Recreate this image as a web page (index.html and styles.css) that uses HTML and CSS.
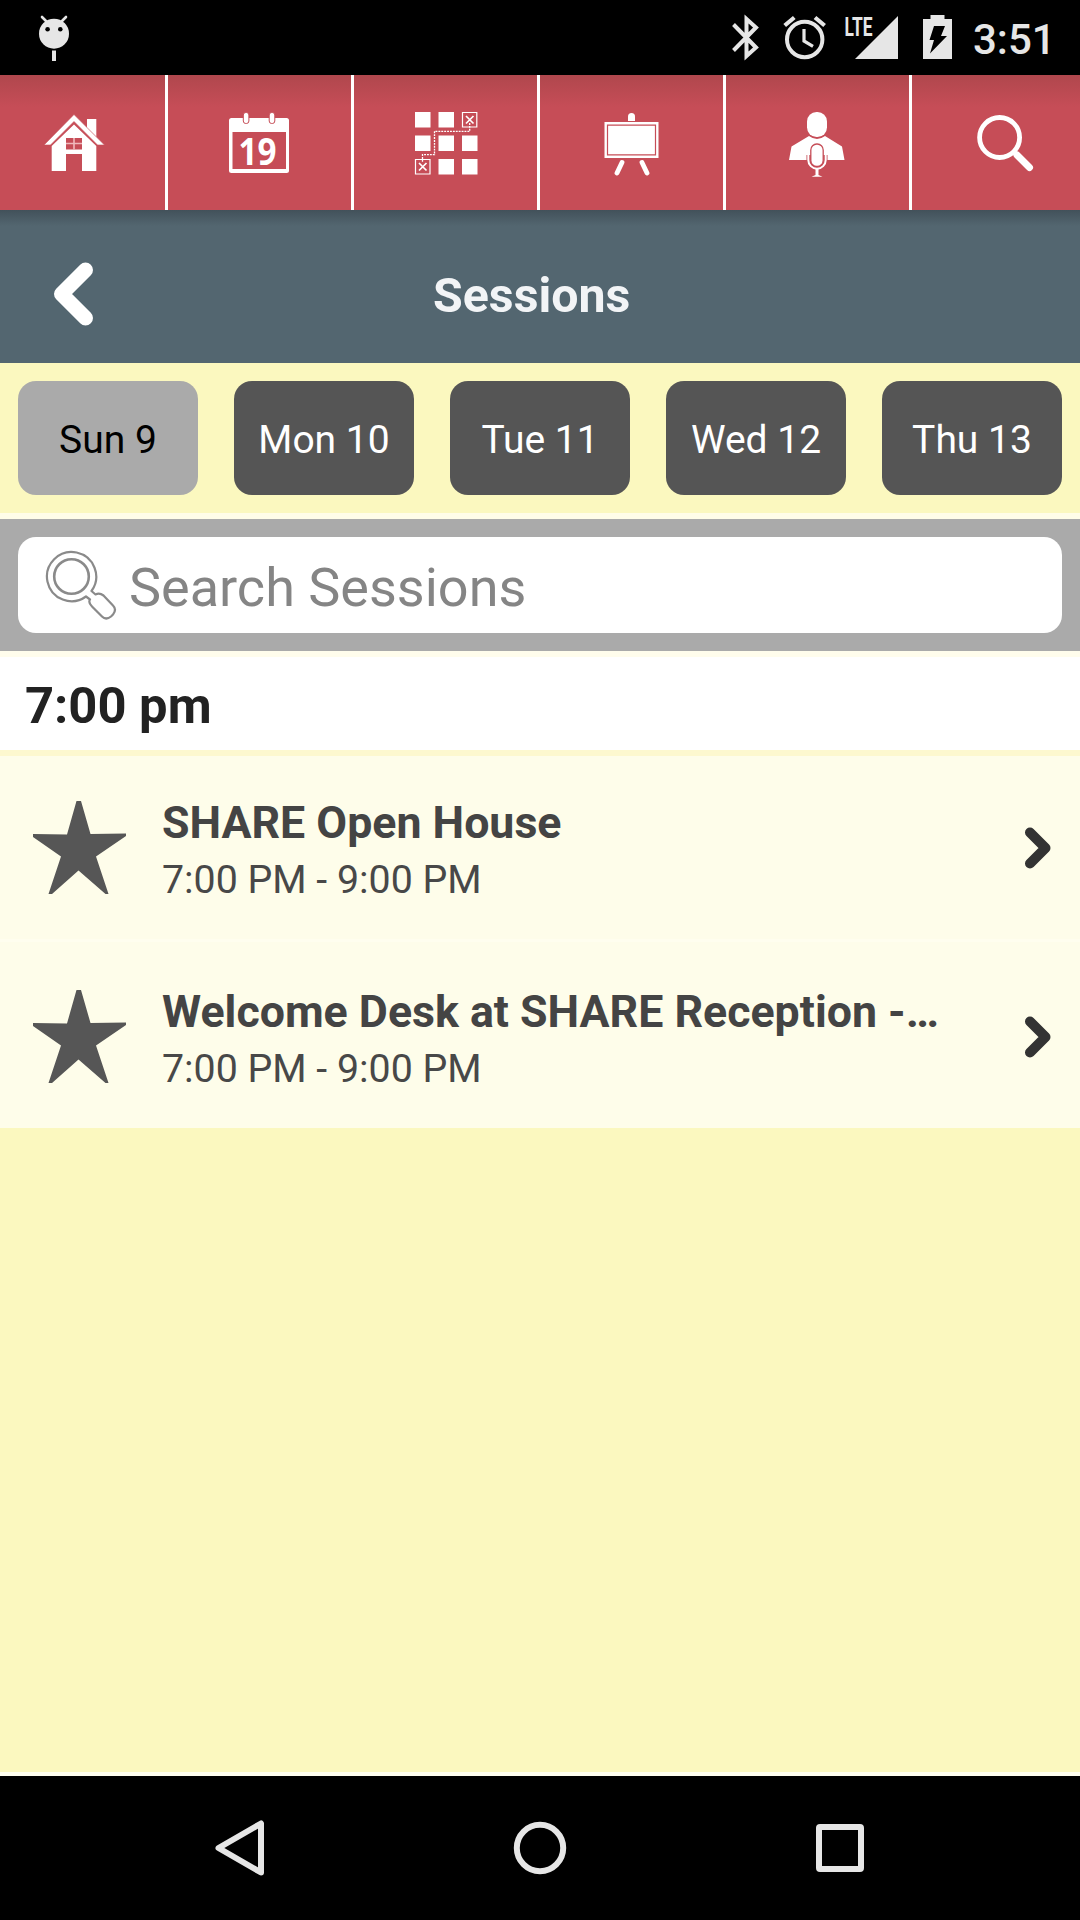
FILE: index.html
```html
<!DOCTYPE html>
<html lang="en">
<head>
  <meta charset="UTF-8" />
  <meta name="viewport" content="width=device-width, initial-scale=1.0"/>
  <title>Sessions</title>
  <link rel="stylesheet" href="styles.css">
</head>
<body>
  <!-- status bar -->
  <div class="status-bar">
    <svg class="debug-icon" width="34" height="48" viewBox="37 14 34 48">
      <path d="M42 17l5 5M66 17l-5 5" stroke="#e6e6e6" stroke-width="2.6" stroke-linecap="round"/>
      <circle cx="54" cy="33.7" r="15" fill="#e6e6e6"/>
      <circle cx="47.6" cy="29.3" r="2.3"/>
      <circle cx="60.3" cy="29.3" r="2.3"/>
      <path d="M52 50.5h4V61h-4z" fill="#e6e6e6"/>
    </svg>
    <svg class="status-icons" width="226" height="75" viewBox="728 0 226 75" fill="none" stroke="#e6e6e6">
      <path d="M733.5 24.5L756 47.5 746.5 56V19L756 27.5 733.5 50.5" stroke-width="4"/>
      <circle cx="804.7" cy="39.5" r="17.7" stroke-width="4"/>
      <path d="M804 29v12l9 5.3" stroke-width="3.2"/>
      <path d="M784.7 25.5l9.6-8M815 17.5l9.6 8" stroke-width="4.2"/>
      <text class="lte" x="844.5" y="35.8" textLength="28" lengthAdjust="spacingAndGlyphs">LTE</text>
      <path d="M898 16v43h-43z" fill="#e6e6e6" stroke="none"/>
      <path d="M930.5 15h14v4h7.5v40h-29V19h7.5z" fill="#e6e6e6" stroke="none"/>
      <path d="M934 26h11l-4 10h6l-17 17.5 4-13.5h-4.500z" fill="#000" stroke="none"/>
    </svg>
    <span class="clock">3:51</span>
  </div>

  <!-- main toolbar -->
  <div class="toolbar">
    <a class="tool tool-edge">
      <svg width="165" height="135" viewBox="0 75 165 135" fill="#fff">
        <path d="M87 119h9.3v18L87 128z"/>
        <path d="M44 145l30-30.5L104.5 145H97.5L74 121.500 50.500 145z" stroke="#c64d57" stroke-width=".6"/>
        <path d="M74 124.500L96.300 146v25H82v-17H66v17H51.700v-25z"/>
        <path d="M66 138h16v11.500H66z" fill="#c64d57"/>
        <path d="M74 138v11.500M66 143.500h16" stroke="#f0b9bc" stroke-width="1.6"/>
      </svg>
    </a>
    <a class="tool">
      <svg width="183" height="135" viewBox="168 75 183 135" fill="#fff">
        <rect x="229" y="118" width="60" height="55" rx="2.5"/>
        <path d="M232.500 132H286v37h-53.500z" fill="#c64d57"/>
        <rect x="243.3" y="112.5" width="5.6" height="11" rx="2.5" stroke="#c64d57"/>
        <rect x="269.2" y="112.5" width="5.6" height="11" rx="2.5" stroke="#c64d57"/>
        <text class="cal-num" x="238.5" y="164.7" textLength="38" lengthAdjust="spacingAndGlyphs">19</text>
      </svg>
    </a>
    <a class="tool">
      <svg width="183" height="135" viewBox="354 75 183 135" fill="#fff">
        <path d="M415 112h15.500v15.500H415zM438.500 112H454v15.500h-15.500zM415 135.500h15.500V151H415zM438.500 135.500H454V151h-15.500zM462 135.500h15.500V151H462zM438.500 159H454v15.500h-15.500zM462 159h15.500v15.500H462z"/>
        <g fill="none" stroke="#fff">
          <path d="M462.500 112.500h14.300v14.500h-14.300zM415.500 159.500h14.500V174h-14.500z" stroke-width="1.2"/>
          <path d="M466 116l7.500 7.500M473.500 116l-7.500 7.500M419 163l7.500 7.500M426.500 163l-7.500 7.500" stroke-width="1.7"/>
          <path d="M469.700 123v8.300h-35.200v23.400h-12v8" stroke-width="1.3" stroke-dasharray="1.9 1"/>
        </g>
      </svg>
    </a>
    <a class="tool">
      <svg width="183" height="135" viewBox="540 75 183 135" fill="#fff">
        <path d="M628 121v-4.500a3.500 3.500 0 0 1 7 0v4.500z"/>
        <path d="M604.500 122h54v36h-54z"/>
        <path d="M607.500 125.200h48v29.600h-48z" stroke="#c64d57" stroke-width="1.2"/>
        <path d="M622 162.500l-5 10.500M642 162.500l5 10.500" stroke="#fff" stroke-width="4.8" stroke-linecap="round"/>
      </svg>
    </a>
    <a class="tool">
      <svg width="183" height="135" viewBox="726 75 183 135" fill="#fff">
        <rect x="807" y="112" width="20" height="25" rx="9.5"/>
        <path d="M789 160l2.500-13.500L809 136q8 6 16 0l17 10.500 2.500 13.500z"/>
        <path d="M809 155v5a8 8 0 0 0 16 0v-5" fill="none" stroke="#c64d57" stroke-width="5"/>
        <rect x="810.8" y="144" width="12.4" height="22.5" rx="6" stroke="#c64d57" stroke-width="1.3"/>
        <path d="M808.300 155v5a8.700 8.700 0 0 0 17.400 0v-5" fill="none" stroke="#fff" stroke-width="2"/>
        <path d="M815.500 169h3v6l4 1.800h-11l4-1.800z"/>
      </svg>
    </a>
    <a class="tool tool-edge">
      <svg width="168" height="135" viewBox="912 75 168 135" fill="none" stroke="#fff">
        <circle cx="999.6" cy="137.5" r="20" stroke-width="4.8"/>
        <path d="M1014 152l3 3" stroke-width="5"/>
        <path d="M1017 155l12.500 12.500" stroke-width="7" stroke-linecap="round"/>
      </svg>
    </a>
  </div>

  <!-- page header -->
  <div class="page-header">
    <svg class="back" width="42" height="66" viewBox="53 261 42 66">
      <path d="M85.500 270L61.500 294l24 24" fill="none" stroke="#fff" stroke-width="15" stroke-linecap="round" stroke-linejoin="round"/>
    </svg>
    <h1>Sessions</h1>
  </div>

  <!-- day picker -->
  <div class="days">
    <a class="day active">Sun 9</a>
    <a class="day">Mon 10</a>
    <a class="day">Tue 11</a>
    <a class="day">Wed 12</a>
    <a class="day">Thu 13</a>
  </div>

  <div class="search">
    <div class="search-box">
      <svg width="72" height="72" viewBox="45 549 72 72" fill="none" stroke="#8a8a8a" stroke-width="2.2" stroke-linejoin="round">
        <circle cx="71.5" cy="576.5" r="17.3" stroke-width="2.6"/>
        <path d="M86 596.500a24.600 24.600 0 1 1 5.500-5.500l4 3.500q4-2 8 1l9.500 10q4 4 0 9l-2 2q-5 4-9 0l-10-10q-4-4-2-7z"/>
      </svg>
      <span>Search Sessions</span>
    </div>
  </div>

  <h2 class="time-title">7:00 pm</h2>

  <div class="session first">
    <svg class="star" width="93" height="93" viewBox="33 801 93 93">
      <path d="M76.500 801h4.500l9.500 33 35.500-.5v2.500l-30 20.500 12.500 37.500h-3l-27-23.500-26.500 23.500H48.500l12.500-37.500L33 837v-3l34 .5z" fill="#565656"/>
    </svg>
    <div class="session-text">
      <h3>SHARE Open House</h3>
      <p>7:00 PM - 9:00 PM</p>
    </div>
    <svg class="arrow" width="28" height="44" viewBox="1024 825.5 28 44">
      <path d="M1030 832l15.500 15.500L1030 863" fill="none" stroke="#333" stroke-width="10" stroke-linecap="round" stroke-linejoin="round"/>
    </svg>
  </div>

  <div class="session">
    <svg class="star" width="93" height="93" viewBox="33 801 93 93">
      <path d="M76.500 801h4.500l9.500 33 35.500-.5v2.500l-30 20.500 12.500 37.500h-3l-27-23.500-26.500 23.500H48.500l12.500-37.500L33 837v-3l34 .5z" fill="#565656"/>
    </svg>
    <div class="session-text">
      <h3>Welcome Desk at SHARE Reception -…</h3>
      <p>7:00 PM - 9:00 PM</p>
    </div>
    <svg class="arrow" width="28" height="44" viewBox="1024 825.5 28 44">
      <path d="M1030 832l15.500 15.500L1030 863" fill="none" stroke="#333" stroke-width="10" stroke-linecap="round" stroke-linejoin="round"/>
    </svg>
  </div>

  <div class="empty"></div>

  <!-- system navigation -->
  <div class="nav-bar">
    <svg width="60" height="60" viewBox="210 1818 60 60"><path d="M261 1823.500v49l-42.500-24.500z"/></svg>
    <svg width="60" height="60" viewBox="510 1818 60 60"><circle cx="540" cy="1848" r="23.2"/></svg>
    <svg width="60" height="60" viewBox="810 1818 60 60"><rect x="819" y="1827" width="42" height="42" rx="1"/></svg>
  </div>
</body>
</html>
```
FILE: styles.css
```css
* {
  box-sizing: border-box;
  margin: 0;
  padding: 0;
  font-family: Roboto, sans-serif;
}

body {
  width: 1080px;
  height: 1920px;
  overflow: hidden;
  display: flex;
  flex-direction: column;
  background: #fbf8bf;
}

svg {
  display: block;
  flex-shrink: 0;
}

.status-bar {
  height: 75px;
  flex-shrink: 0;
  background: #000;
  display: flex;
  align-items: center;
  padding: 0 30px 0 37px;
}

.status-icons {
  margin-left: auto;
}

.lte {
  font-size: 26px;
  font-weight: bold;
  fill: #e6e6e6;
  stroke: none;
}

.clock {
  width: 77px;
  margin-left: 19px;
  font-size: 42px;
  font-weight: 500;
  line-height: 48px;
  color: #e6e6e6;
  padding-top: 5px;
}

.toolbar {
  display: flex;
  height: 135px;
  flex-shrink: 0;
  background: linear-gradient(#b0474d, #c64d57 32px);
}

.tool {
  width: 186px;
  border-right: 3px solid #fff;
}

.tool-edge {
  width: 168px;
}

.tool:last-child {
  border-right: none;
}

.cal-num {
  font-family: "Open Sans", sans-serif;
  font-size: 37px;
  font-weight: bold;
}

.page-header {
  height: 153px;
  flex-shrink: 0;
  display: flex;
  align-items: center;
  padding: 15px 53px 0;
  background: linear-gradient(#42515a, #536670 16px);
}

.page-header h1 {
  margin-left: 338px;
  padding-top: 3px;
  font-size: 48.3px;
  line-height: 56px;
  color: #f2f4f6;
}

.days {
  height: 156px;
  flex-shrink: 0;
  display: flex;
  gap: 36px;
  padding: 18px;
  border-bottom: 6px solid #fffde8;
}

.day {
  width: 180px;
  height: 114px;
  border-radius: 18px;
  background: #555;
  color: #fff;
  font-size: 39px;
  line-height: 119px;
  text-align: center;
}

.day.active {
  background: #aaa;
  color: #000;
}

.search {
  height: 132px;
  flex-shrink: 0;
  padding: 18px;
  background: #aaa;
}

.search-box {
  height: 96px;
  border-radius: 18px;
  background: #fff;
  display: flex;
  align-items: center;
  padding-left: 27px;
}

.search-box span {
  margin-left: 12px;
  padding-top: 4px;
  font-size: 54px;
  color: #858585;
}

.time-title {
  height: 99px;
  flex-shrink: 0;
  border-top: 6px solid #fffdec;
  background: #fff;
  padding-left: 25px;
  font-size: 50.7px;
  line-height: 98px;
  color: #222;
}

.session {
  height: 189px;
  flex-shrink: 0;
  display: flex;
  align-items: center;
  padding: 3px 28px 0 33px;
  border-top: 3px solid #fffeef;
  background: #fefdea;
}

.session.first {
  padding-top: 0;
  border-top: 6px solid #fdf8cf;
}

.session-text {
  margin-left: 36px;
  padding-top: 7px;
}

.session-text h3 {
  font-size: 44.7px;
  line-height: 58px;
  color: #444;
}

.session-text p {
  font-size: 39.3px;
  line-height: 56px;
  color: #484848;
}

.arrow {
  margin-left: auto;
}

.empty {
  flex: 1;
  border-bottom: 4px solid #fffff0;
}

.nav-bar {
  height: 144px;
  flex-shrink: 0;
  display: flex;
  align-items: center;
  justify-content: center;
  gap: 240px;
  background: #000;
}

.nav-bar svg {
  fill: none;
  stroke: #e6e6e6;
  stroke-width: 6;
  stroke-linejoin: round;
}
```
